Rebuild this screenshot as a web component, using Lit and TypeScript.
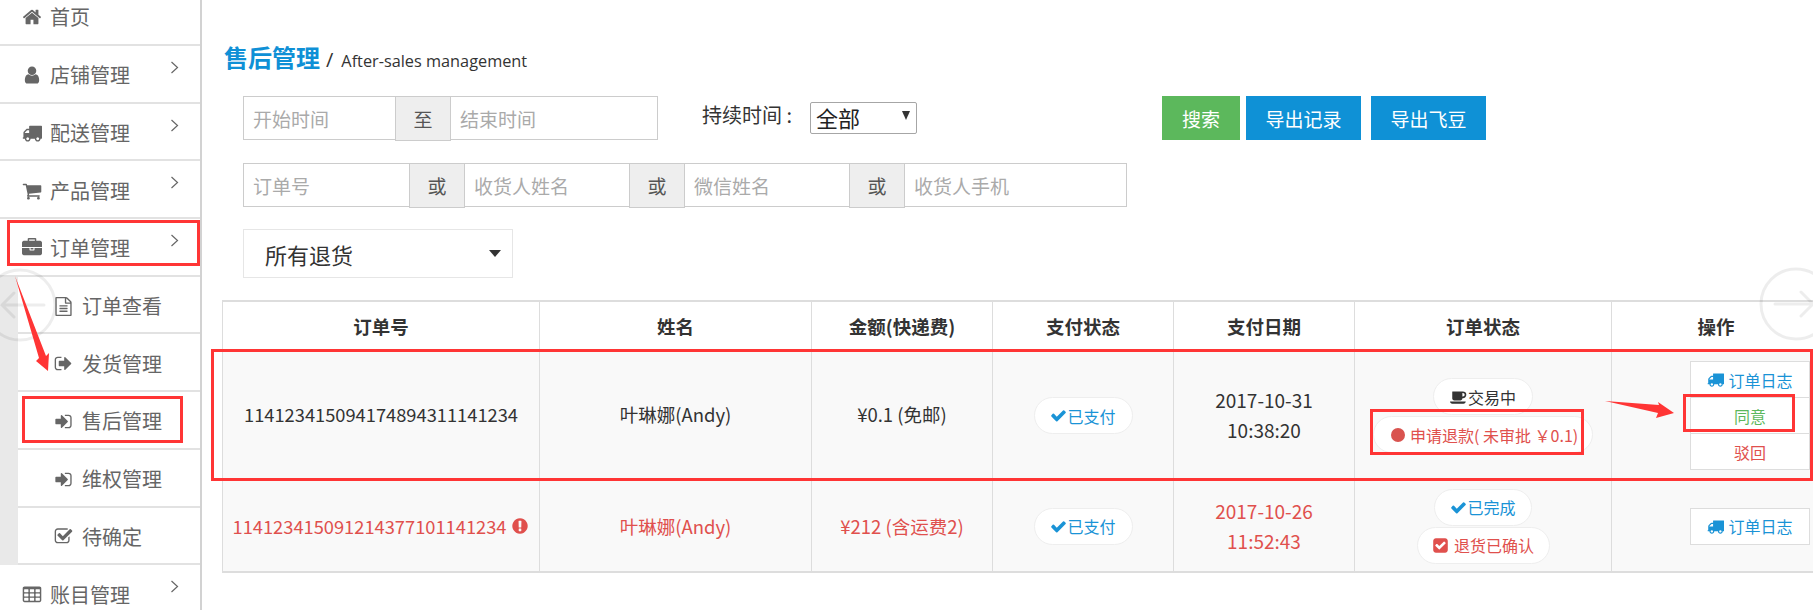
import { LitElement, html, css, svg } from "lit";
import { customElement } from "lit/decorators.js";

const P: Record<string, [string, string]> = {
  home: ["0 0 1792 1792", "M1472 992v480q0 26-19 45t-45 19h-384v-384h-256v384h-384q-26 0-45-19t-19-45v-480q0-1 .5-3t.5-3l575-474 575 474q1 2 1 6zm223-69l-62 74q-8 9-21 11h-3q-13 0-21-7l-692-577-692 577q-12 8-24 7-13-2-21-11l-62-74q-8-10-7-23.500t11-21.500l719-599q32-26 76-26t76 26l244 204v-195q0-14 9-23t23-9h192q14 0 23 9t9 23v408l219 182q10 8 11 21.500t-7 23.500z"],
  user: ["0 0 1792 1792", "M1536 1399q0 109-62.500 187t-150.500 78h-854q-88 0-150.500-78t-62.500-187q0-85 8.500-160.500t31.500-152 58.500-131 94-89 134.500-34.500q131 128 313 128t313-128q76 0 134.500 34.500t94 89 58.500 131 31.500 152 8.500 160.500zm-256-887q0 159-112.500 271.500t-271.500 112.500-271.500-112.500-112.500-271.500 112.500-271.500 271.500-112.500 271.500 112.500 112.500 271.500z"],
  truck: ["0 0 1792 1792", "M640 1408q0-52-38-90t-90-38-90 38-38 90 38 90 90 38 90-38 38-90zm-384-512h384v-256h-158q-13 0-22 9l-195 195q-9 9-9 22v30zm1280 512q0-52-38-90t-90-38-90 38-38 90 38 90 90 38 90-38 38-90zm256-1088v1024q0 15-4 26.500t-13.500 18.500-16.500 11.500-23.500 6-22.500 2-25.500 0-22.500-.5q0 106-75 181t-181 75-181-75-75-181h-384q0 106-75 181t-181 75-181-75-75-181h-64q-3 0-22.500.5t-25.500 0-22.500-2-23.500-6-16.500-11.500-13.500-18.500-4-26.500q0-26 19-45t45-19v-320q0-8-.5-35t0-38 2.500-34.500 6.500-37 14-30.500 22.500-30l198-198q19-19 50.500-32t58.500-13h160v-192q0-26 19-45t45-19h1024q26 0 45 19t19 45z"],
  cart: ["0 0 1792 1792", "M704 1536q0 52-38 90t-90 38-90-38-38-90 38-90 90-38 90 38 38 90zm896 0q0 52-38 90t-90 38-90-38-38-90 38-90 90-38 90 38 38 90zm128-1088v512q0 24-16.500 42.500t-40.500 21.500l-1044 122q13 60 13 70 0 16-24 64h920q26 0 45 19t19 45-19 45-45 19h-1024q-26 0-45-19t-19-45q0-11 8-31.500t16-36 21.500-40 15.500-29.500l-177-823h-204q-26 0-45-19t-19-45 19-45 45-19h256q16 0 28.500 6.500t19.500 15.500 13 24.500 8 26 5.500 29.500 4.500 26h1201q26 0 45 19t19 45z"],
  briefcase: ["0 0 1792 1792", "M640 256h512v-128h-512v128zm1152 640v480q0 66-47 113t-113 47h-1472q-66 0-113-47t-47-113v-480h672v160q0 26 19 45t45 19h320q26 0 45-19t19-45v-160h672zm-768 0v128h-256v-128h256zm768-480v384h-1792v-384q0-66 47-113t113-47h352v-160q0-40 28-68t68-28h576q40 0 68 28t28 68v160h352q66 0 113 47t47 113z"],
  file: ["0 0 1792 1792", "M1596 380q28 28 48 76t20 88v1152q0 40-28 68t-68 28h-1344q-40 0-68-28t-28-68v-1600q0-40 28-68t68-28h896q40 0 88 20t76 48zm-444-244v376h376q-10-29-22-41l-313-313q-12-12-41-22zm384 1528v-1024h-416q-40 0-68-28t-28-68v-416h-768v1536h1280zm-1024-864q0-14 9-23t23-9h704q14 0 23 9t9 23v64q0 14-9 23t-23 9h-704q-14 0-23-9t-9-23v-64zm736 224q14 0 23 9t9 23v64q0 14-9 23t-23 9h-704q-14 0-23-9t-9-23v-64q0-14 9-23t23-9h704zm0 256q14 0 23 9t9 23v64q0 14-9 23t-23 9h-704q-14 0-23-9t-9-23v-64q0-14 9-23t23-9h704z"],
  signin: ["0 0 1792 1792", "M1312 896q0 26-19 45l-544 544q-19 19-45 19t-45-19-19-45v-288h-448q-26 0-45-19t-19-45v-384q0-26 19-45t45-19h448v-288q0-26 19-45t45-19 45 19l544 544q19 19 19 45zm352-352v704q0 119-84.500 203.500t-203.500 84.500h-320q-13 0-22.500-9.500t-9.500-22.500q0-4-1-20t-.500-26.500 3-23.500 10-19.500 20.500-6.500h320q66 0 113-47t47-113v-704q0-66-47-113t-113-47h-288-11-13t-11.500-1-11.500-3-8-5.500-7-9-2-13.500q0-4-1-20t-.500-26.500 3-23.500 10-19.500 20.500-6.500h320q119 0 203.500 84.500t84.500 203.500z"],
  signout: ["0 0 1792 1792", "M704 1440q0 4 1 20t.5 26.500-3 23.500-10 19.500-20.500 6.500h-320q-119 0-203.500-84.500t-84.500-203.500v-704q0-119 84.500-203.500t203.500-84.500h320q13 0 22.500 9.500t9.500 22.500q0 4 1 20t.5 26.500-3 23.500-10 19.500-20.500 6.500h-320q-66 0-113 47t-47 113v704q0 66 47 113t113 47h312l11 1 11 3 8 5.500 7 9 2 13.500zm928-544q0 26-19 45l-544 544q-19 19-45 19t-45-19-19-45v-288h-448q-26 0-45-19t-19-45v-384q0-26 19-45t45-19h448v-288q0-26 19-45t45-19 45 19l544 544q19 19 19 45z"],
  checksq: ["0 0 1792 1792", "M1472 930v318q0 119-84.500 203.500t-203.500 84.500h-832q-119 0-203.500-84.500t-84.500-203.500v-832q0-119 84.500-203.500t203.500-84.500h832q63 0 117 25 15 7 18 23 3 17-9 29l-49 49q-10 10-23 10-3 0-9-2-23-6-45-6h-832q-66 0-113 47t-47 113v832q0 66 47 113t113 47h832q66 0 113-47t47-113v-254q0-13 9-22l64-64q10-10 23-10 6 0 12 3 20 8 20 29zm231-489l-814 814q-24 24-57 24t-57-24l-430-430q-24-24-24-57t24-57l110-110q24-24 57-24t57 24l263 263 647-647q24-24 57-24t57 24l110 110q24 24 24 57t-24 57z"],
  table: ["0 0 1792 1792", "M576 1376v-192q0-14-9-23t-23-9h-320q-14 0-23 9t-9 23v192q0 14 9 23t23 9h320q14 0 23-9t9-23zm0-384v-192q0-14-9-23t-23-9h-320q-14 0-23 9t-9 23v192q0 14 9 23t23 9h320q14 0 23-9t9-23zm512 384v-192q0-14-9-23t-23-9h-320q-14 0-23 9t-9 23v192q0 14 9 23t23 9h320q14 0 23-9t9-23zm-512-768v-192q0-14-9-23t-23-9h-320q-14 0-23 9t-9 23v192q0 14 9 23t23 9h320q14 0 23-9t9-23zm512 384v-192q0-14-9-23t-23-9h-320q-14 0-23 9t-9 23v192q0 14 9 23t23 9h320q14 0 23-9t9-23zm512 384v-192q0-14-9-23t-23-9h-320q-14 0-23 9t-9 23v192q0 14 9 23t23 9h320q14 0 23-9t9-23zm-512-768v-192q0-14-9-23t-23-9h-320q-14 0-23 9t-9 23v192q0 14 9 23t23 9h320q14 0 23-9t9-23zm512 384v-192q0-14-9-23t-23-9h-320q-14 0-23 9t-9 23v192q0 14 9 23t23 9h320q14 0 23-9t9-23zm0-384v-192q0-14-9-23t-23-9h-320q-14 0-23 9t-9 23v192q0 14 9 23t23 9h320q14 0 23-9t9-23zm128-320v1088q0 66-47 113t-113 47h-1344q-66 0-113-47t-47-113v-1088q0-66 47-113t113-47h1344q66 0 113 47t47 113z"],
  check: ["0 0 1792 1792", "M1671 566q0 40-28 68l-724 724-136 136q-28 28-68 28t-68-28l-136-136-362-362q-28-28-28-68t28-68l136-136q28-28 68-28t68 28l294 295 656-657q28-28 68-28t68 28l136 136q28 28 28 68z"],
  coffee: ["-64 0 2048 1792", "M1600 640q0-80-56-136t-136-56h-64v384h64q80 0 136-56t56-136zm-1664 768h1792q0 106-75 181t-181 75h-1280q-106 0-181-75t-75-181zm1856-768q0 159-112.500 271.500t-271.500 112.500h-64v32q0 92-66 158t-158 66h-704q-92 0-158-66t-66-158v-736q0-26 19-45t45-19h1152q159 0 271.500 112.500t112.500 271.500z"],
  warn: ["0 0 1792 1792", "M896 128q209 0 385.500 103t279.500 279.500 103 385.500-103 385.500-279.500 279.500-385.500 103-385.500-103-279.500-279.500-103-385.500 103-385.500 279.500-279.500 385.500-103zm128 1247v-190q0-14-9-23.500t-22-9.500h-192q-13 0-23 10t-10 23v190q0 13 10 23t23 10h192q13 0 22-9.500t9-23.500zm-2-344l18-621q0-12-10-18-10-8-24-8h-220q-14 0-24 8-10 6-10 18l17 621q0 10 10 17.500t24 7.500h185q14 0 23.500-7.500t10.500-17.500z"],
  checkbox: ["0 0 1792 1792", "M813 1299l614-614q19-19 19-45t-19-45l-102-102q-19-19-45-19t-45 19l-467 467-211-211q-19-19-45-19t-45 19l-102 102q-19 19-19 45t19 45l358 358q19 19 45 19t45-19zm851-883v960q0 119-84.500 203.500t-203.500 84.500h-960q-119 0-203.500-84.500t-84.500-203.500v-960q0-119 84.500-203.500t203.500-84.500h960q119 0 203.500 84.500t84.500 203.500z"],
};

const icon = (name: string, size: number) => html`<svg class="ic" width=${size} height=${size} viewBox=${P[name][0]} fill="currentColor"><path d=${P[name][1]}></path></svg>`;

const chevron = html`<svg class="chev" width="9" height="13" viewBox="0 0 9 13" fill="none" stroke="currentColor" stroke-width="1.2"><path d="M1.5 1l6 5.500-6 5.500"></path></svg>`;

const topItems = [
  ["user", "店铺管理"],
  ["truck", "配送管理"],
  ["cart", "产品管理"],
  ["briefcase", "订单管理"],
];
const subItems = [
  ["file", "订单查看"],
  ["signout", "发货管理"],
  ["signin", "售后管理"],
  ["signin", "维权管理"],
  ["checksq", "待确定"],
];

@customElement("app-root")
export class AppRoot extends LitElement {
  static styles = css`
    :host { display: block; width: 1813px; height: 610px; position: relative; overflow: hidden; background: #fff;
      font-family: "Noto Sans CJK SC", "Open Sans", sans-serif; color: #333; }
    * { box-sizing: border-box; }
    .ic { flex: none; display: block; }
    .page { display: flex; height: 610px; }

    .side { width: 202px; flex: none; border-right: 2px solid #d2d2d2; color: #666; font-size: 20px; }
    .item { height: 57.7px; display: flex; align-items: center; padding: 3px 0 0 22px; border-bottom: 2px solid #e2e2e2; }
    .item.first { height: 46px; padding-top: 0; padding-bottom: 10px; }
    .item .slot { width: 28px; flex: none; }
    .item .name { flex: 1; line-height: 1; }
    .chev { margin: -16px 21px 0 0; flex: none; }
    .subs { padding-left: 18px; background: #e9e9e9; }
    .subs .item { background: #fff; padding-left: 36px; }

    .main { flex: 1; min-width: 0; padding: 39px 0 0 20px; }
    .title { display: flex; align-items: baseline; height: 36px; line-height: 36px; margin-left: 2px; }
    .title b { font-size: 24px; color: #0f90d6; font-weight: 700; }
    .title .sl { font-size: 20px; margin: 0 8px 0 6px; font-family: "Open Sans", sans-serif; font-weight: 400; }
    .title .en { font-size: 16.3px; font-family: "Open Sans", sans-serif; }

    .row { display: flex; align-items: flex-start; margin-left: 21px; }
    .row1 { margin-top: 21px; height: 44px; }
    .row2 { margin-top: 23px; height: 44px; }
    .row3 { margin-top: 22px; }
    .group { display: flex; height: 44px; border: 1px solid #ccc; }
    .group input { border: 0; outline: 0; padding: 0 0 0 9px; height: 100%; font: 19px "Noto Sans CJK SC", sans-serif; min-width: 0; background: #fff; }
    .group input::placeholder { color: #aaa; opacity: 1; }
    .addon { width: 56px; height: 44px; background: #eee; border-left: 1px solid #ccc; border-right: 1px solid #ccc; border-bottom: 1px solid #ccc;
      display: flex; align-items: center; justify-content: center; font-size: 19px; color: #555; flex: none; }
    .group.a { width: 415px; }
    .group.b { width: 884px; }

    .lbl { font-size: 20px; margin: 0 0 0 44px; width: 108px; line-height: 38px; white-space: nowrap; }
    .sel { width: 107px; height: 32px; margin-top: 6px; border: 1px solid #a6a6a6; border-radius: 2px; position: relative; font-size: 22px; line-height: 29px; padding-left: 5px; color: #222; }
    .sel::after { content: ""; position: absolute; right: 6px; top: 8px; border: 4px solid transparent; border-top: 9px solid #333; border-bottom: 0; }
    .btn { height: 44px; color: #fff; font-size: 19px; display: flex; align-items: center; justify-content: center; background: #0f91d6; flex: none; }
    .btn.s { width: 78px; background: #5cb85c; margin-left: 245px; }
    .btn.r { width: 115px; margin-left: 6px; }
    .btn.f { width: 115px; margin-left: 10px; }

    .dd { width: 270px; height: 49px; border: 1px solid #e6e6e6; display: flex; align-items: center; justify-content: space-between; padding: 0 10px 0 21px; font-size: 22px; color: #333; }
    .dd i { border: 6px solid transparent; border-top: 7px solid #333; border-bottom: 0; margin-right: 1px; }

    .tw { margin: 22px 0 0 0; }
    table { border-collapse: collapse; table-layout: fixed; width: 1598px; font-size: 18.5px; }
    th, td { border: 1px solid #ddd; border-width: 2px 1.5px; padding: 0; text-align: center; vertical-align: middle; font-weight: 400; }
    th { height: 50px; font-weight: 700; padding-bottom: 1px; }
    tbody tr { background: #f9f9f9; }
    tr.r1 td { height: 129px; }
    tr.r2 td { height: 92px; }
    tr.r1 td.t { padding-bottom: 3px; }
    .red { color: #e0504d; }
    .num { font-size: 18.3px; }
    .dates { line-height: 30px; font-size: 19px; padding-bottom: 1px; }
    .wn { display: inline-flex; align-items: center; gap: 5px; }

    .pills { display: flex; flex-direction: column; align-items: center; gap: 1px; }
    .pill { display: inline-flex; align-items: center; justify-content: center; height: 37px; background: #fff; border: 1px solid #eee; border-radius: 19px; font-size: 16px; white-space: nowrap; line-height: 1; }
    .pay { width: 99px; color: #1a93d6; }
    .p-trade { width: 100px; color: #333; }
    .p-done { width: 98px; color: #1a93d6; }
    .p-ref { width: 220px; color: #e0504d; gap: 5px; justify-content: flex-start; padding-left: 17px; }
    .p-ok { width: 133px; color: #e0504d; gap: 5px; }
    .dot { width: 14px; height: 14px; border-radius: 50%; background: #d9534f; flex: none; }

    .ops { width: 120px; margin-left: 78px; display: flex; flex-direction: column; background: #fff; }
    .op { height: 37px; border: 1px solid #ddd; display: flex; align-items: center; justify-content: center; gap: 4px; font-size: 16px; background: #fff; }
    .op + .op { margin-top: -1px; }
    .blue { color: #1a93d6; }
    .green { color: #5cb85c; }

    .mark { position: absolute; border: 3px solid #ff3535; pointer-events: none; }
    .overlay { position: absolute; left: 0; top: 0; pointer-events: none; }
  `;

  private tr(v: [number, number, number, number]) {
    return `left:${v[0]}px;top:${v[1]}px;width:${v[2] - v[0]}px;height:${v[3] - v[1]}px`;
  }

  render() {
    const log = html`<div class="op blue">${icon("truck", 17)}<span>订单日志</span></div>`;
    return html`
      <div class="page">
        <nav class="side">
          <div class="item first"><span class="slot">${icon("home", 20)}</span><span class="name">首页</span></div>
          ${topItems.map((t) => html`<div class="item"><span class="slot">${icon(t[0], 20)}</span><span class="name">${t[1]}</span>${chevron}</div>`)}
          <div class="subs">
            ${subItems.map((t) => html`<div class="item"><span class="slot">${icon(t[0], 19)}</span><span class="name">${t[1]}</span></div>`)}
          </div>
          <div class="item"><span class="slot">${icon("table", 20)}</span><span class="name">账目管理</span>${chevron}</div>
        </nav>
        <main class="main">
          <div class="title"><b>售后管理</b><span class="sl">/</span><span class="en">After-sales management</span></div>
          <div class="row row1">
            <div class="group a">
              <input style="width:151px" placeholder="开始时间" />
              <div class="addon">至</div>
              <input style="flex:1" placeholder="结束时间" />
            </div>
            <div class="lbl">持续时间 :</div>
            <div class="sel">全部</div>
            <div class="btn s">搜索</div>
            <div class="btn r">导出记录</div>
            <div class="btn f">导出飞豆</div>
          </div>
          <div class="row row2">
            <div class="group b">
              <input style="width:165px" placeholder="订单号" />
              <div class="addon">或</div>
              <input style="width:164px" placeholder="收货人姓名" />
              <div class="addon">或</div>
              <input style="width:164px" placeholder="微信姓名" />
              <div class="addon">或</div>
              <input style="flex:1" placeholder="收货人手机" />
            </div>
          </div>
          <div class="row row3"><div class="dd">所有退货<i></i></div></div>
          <div class="tw">
            <table>
              <colgroup><col style="width:317px" /><col style="width:272px" /><col style="width:181px" /><col style="width:181px" /><col style="width:181px" /><col style="width:257px" /><col style="width:209px" /></colgroup>
              <thead><tr><th>订单号</th><th>姓名</th><th>金额(快递费)</th><th>支付状态</th><th>支付日期</th><th>订单状态</th><th>操作</th></tr></thead>
              <tbody>
                <tr class="r1">
                  <td class="num t">114123415094174894311141234</td>
                  <td class="t">叶琳娜(Andy)</td>
                  <td class="t">¥0.1 (免邮)</td>
                  <td><div class="pills"><span class="pill pay">${icon("check", 17)}已支付</span></div></td>
                  <td class="dates">2017-10-31<br />10:38:20</td>
                  <td><div class="pills"><span class="pill p-trade">${icon("coffee", 18)}交易中</span><span class="pill p-ref"><i class="dot"></i>申请退款( 未审批 ￥0.1)</span></div></td>
                  <td><div class="ops">${log}<div class="op green">同意</div><div class="op red">驳回</div></div></td>
                </tr>
                <tr class="r2 red">
                  <td class="num"><span class="wn">114123415091214377101141234${icon("warn", 18)}</span></td>
                  <td>叶琳娜(Andy)</td>
                  <td>¥212 (含运费2)</td>
                  <td><div class="pills"><span class="pill pay">${icon("check", 17)}已支付</span></div></td>
                  <td class="dates">2017-10-26<br />11:52:43</td>
                  <td><div class="pills"><span class="pill p-done">${icon("check", 17)}已完成</span><span class="pill p-ok">${icon("checkbox", 17)}退货已确认</span></div></td>
                  <td><div class="ops">${log}</div></td>
                </tr>
              </tbody>
            </table>
          </div>
        </main>
      </div>

      <svg class="overlay" width="1813" height="610" viewBox="0 0 1813 610">
        ${svg`
          <g fill="none" stroke="#000" stroke-opacity=".07" stroke-width="3">
            <circle cx="20" cy="305" r="35"></circle>
            <path d="M2 305h42M14 293l-12 12 12 12" stroke-linecap="round"></path>
            <circle cx="1796" cy="304" r="35"></circle>
            <path d="M1775 304h38M1801 292l12 12-12 12" stroke-linecap="round"></path>
          </g>
          <polygon fill="#ff3535" points="15,276 46,356 49,353 48,371 36,361 39,358"></polygon>
          <polygon fill="#ff3535" points="1605,401 1659,405 1658,402 1674,413 1656,418 1658,413"></polygon>
        `}
      </svg>
      <div class="mark" style=${this.tr([7, 220, 200, 266])}></div>
      <div class="mark" style=${this.tr([22, 396, 183, 443])}></div>
      <div class="mark" style=${this.tr([211, 349, 1813, 481])}></div>
      <div class="mark" style=${this.tr([1370, 409, 1584, 455])}></div>
      <div class="mark" style=${this.tr([1683, 394, 1795, 432])}></div>
    `;
  }
}
